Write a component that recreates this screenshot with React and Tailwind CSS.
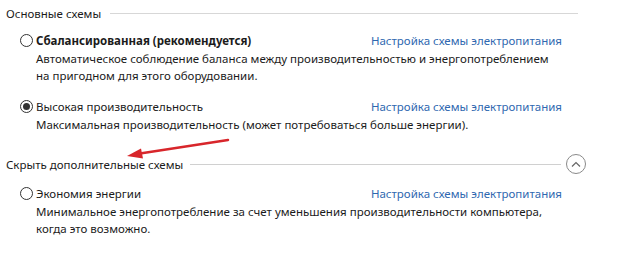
import React from 'react'

const font = { fontFamily: '"Noto Sans", "Open Sans", sans-serif' }

const Radio = ({ checked }) => (
    <span className='w-[13px] h-[13px] rounded-full border border-[#333] bg-white grid place-items-center shrink-0'>
        {checked && <span className='w-[7px] h-[7px] rounded-full bg-[#333]'></span>}
    </span>
)

const Plan = ({ name, bold, checked, desc, className }) => (
    <div className={`pl-[14px] ${className}`}>
        <div className='flex items-center w-[542px] h-[18px]'>
            <Radio checked={checked} />
            <span className={`ml-[3px] ${bold ? 'font-bold' : ''}`}>{name}</span>
            <a className='ml-auto text-[#2f68b0] cursor-pointer'>Настройка схемы электропитания</a>
        </div>
        <div className='pl-[16px] mt-[1px] leading-[17px]'>
            {desc.map((line, i) => <div key={i}>{line}</div>)}
        </div>
    </div>
)

const App = () => {
    return (
        <div className='relative w-[621px] h-[257px] bg-white text-[11.5px] text-[#1b1b1b] leading-[17px] pl-[6px] pt-[4px] overflow-hidden' style={font}>
            <div className='flex items-center w-[572px] h-[18px]'>
                <span>Основные схемы</span>
                <div className='flex-1 h-px bg-[#d7d7d7] ml-[9px]'></div>
            </div>

            <Plan
                className='mt-[9px]'
                name='Сбалансированная (рекомендуется)'
                bold
                desc={[
                    'Автоматическое соблюдение баланса между производительностью и энергопотреблением',
                    'на пригодном для этого оборудовании.'
                ]}
            />

            <Plan
                className='mt-[13px]'
                name='Высокая производительность'
                checked
                desc={['Максимальная производительность (может потребоваться больше энергии).']}
            />

            <div className='flex items-center w-[580px] h-[20px] mt-[21px]'>
                <span>Скрыть дополнительные схемы</span>
                <div className='flex-1 h-px bg-[#d0d0d0] ml-[7px]'></div>
                <span className='ml-[5px] w-[20px] h-[20px] rounded-full border border-[#8a8a8a] grid place-items-center'>
                    <svg width='10' height='6' viewBox='0 0 10 6'>
                        <path d='M1 5.5 L5 1.5 L9 5.5' fill='none' stroke='#666' strokeWidth='1.2' />
                    </svg>
                </span>
            </div>

            <Plan
                className='mt-[10px]'
                name='Экономия энергии'
                desc={[
                    'Минимальное энергопотребление за счет уменьшения производительности компьютера,',
                    'когда это возможно.'
                ]}
            />

            <svg className='absolute left-0 top-0 pointer-events-none' width='621' height='257'>
                <line x1='228' y1='140' x2='140' y2='153.5' stroke='#d8262b' strokeWidth='2.5' strokeLinecap='round' />
                <path d='M127 156 L141 148.5 L143 158.5 Z' fill='#d8262b' />
            </svg>
        </div>
    )
}

export default App
